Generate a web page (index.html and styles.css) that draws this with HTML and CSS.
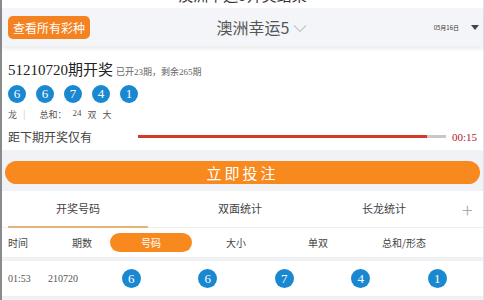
FILE: index.html
```html
<!DOCTYPE html>
<html lang="zh">
<head>
<meta charset="utf-8">
<link rel="stylesheet" href="styles.css">
</head>
<body>
<div class="page">
  <div class="topbar"><div class="topbar-title">澳洲幸运5开奖结果</div></div>
  <header class="header">
    <button class="all-btn">查看所有彩种</button>
    <div class="lottery-name">澳洲幸运5
      <svg class="chev" width="14" height="9" viewBox="0 0 14 9"><path d="M1 1.5 L7 7.5 L13 1.5" fill="none" stroke="#c4c8cf" stroke-width="1.2"/></svg>
    </div>
    <div class="date">05月16日 <span class="tri"></span></div>
  </header>

  <section class="card">
    <div class="issue"><span class="issue-no">51210720期开奖</span><span class="issue-sub">已开23期，剩余265期</span></div>
    <div class="balls">
      <span class="ball">6</span><span class="ball">6</span><span class="ball">7</span><span class="ball">4</span><span class="ball">1</span>
    </div>
    <div class="stats"><span>龙</span><span class="sep">|</span><span class="sum">总和：</span><span class="num">24</span><span>双</span><span>大</span></div>
    <div class="countdown">
      <span class="cd-label">距下期开奖仅有</span>
      <div class="bar"><div class="bar-fill" style="width:94%"></div></div>
      <span class="cd-time">00:15</span>
    </div>
  </section>

  <div class="bet-wrap"><button class="bet-btn">立即投注</button></div>

  <nav class="tabs">
    <div class="tab active">开奖号码</div>
    <div class="tab">双面统计</div>
    <div class="tab">长龙统计</div>
    <div class="plus">+</div>
  </nav>

  <div class="row head">
    <div class="c-time">时间</div>
    <div class="c-issue">期数</div>
    <div class="c-pill"><span class="pill">号码</span></div>
    <div class="c-col">大小</div>
    <div class="c-col">单双</div>
    <div class="c-col">总和/形态</div>
  </div>
  <div class="row data">
    <div class="c-time num-serif">01:53</div>
    <div class="c-issue num-serif">210720</div>
    <div class="c-ball"><span class="ball">6</span></div>
    <div class="c-ball"><span class="ball">6</span></div>
    <div class="c-ball"><span class="ball">7</span></div>
    <div class="c-ball"><span class="ball">4</span></div>
    <div class="c-ball"><span class="ball">1</span></div>
  </div>
</div>
</body>
</html>
```

FILE: styles.css
```css
* { box-sizing: border-box; }
html, body { margin: 0; padding: 0; }
body {
  width: 484px;
  height: 300px;
  overflow: hidden;
  background: #f1f2f5;
  font-family: "Noto Sans CJK SC", "Noto Sans", sans-serif;
  color: #333;
}
.page {
  border-left: 2px solid #8a8a8a;
  border-right: 1px solid #e2e2e2;
  height: 300px;
  background: #f1f2f5;
}
.topbar {
  height: 8px;
  overflow: hidden;
  background: #fff;
}
.topbar-title {
  margin-top: -14px;
  font-size: 15px;
  line-height: 18px;
  text-align: center;
  color: #333;
}
.header {
  height: 38px;
  background: #f3f5f8;
  display: flex;
  align-items: center;
  padding: 0 4px 0 6px;
  position: relative;
  box-shadow: 0 3px 4px rgba(0,0,0,0.08);
  z-index: 1;
}
.all-btn {
  border: none;
  background: #f58220;
  color: #fff;
  font-family: inherit;
  font-size: 12px;
  height: 23px;
  padding: 0 5px;
  border-radius: 5px;
  line-height: 23px;
}
.lottery-name {
  flex: 1;
  text-align: center;
  font-size: 16px;
  color: #555;
  padding-left: 0;
  display: flex;
  justify-content: center;
  align-items: center;
  gap: 4px;
}
.chev { margin-top: 2px; }
.date {
  font-size: 6px;
  color: #333;
  display: flex;
  align-items: center;
  gap: 12px;
}
.tri {
  width: 0; height: 0;
  border-left: 4px solid transparent;
  border-right: 4px solid transparent;
  border-top: 5px solid #444;
}
.card {
  background: #fff;
  padding: 12px 6px 0 6px;
  height: 104px;
}
.issue { display: flex; align-items: baseline; gap: 3px; }
.issue-no {
  font-family: "Liberation Serif", "Noto Sans CJK SC", serif;
  font-size: 15px;
  color: #222;
}
.issue-sub { font-size: 9px; color: #666; font-family: "Liberation Serif", "Noto Sans CJK SC", serif; }
.balls { display: flex; gap: 10px; margin-top: 6px; }
.ball {
  width: 18px; height: 18px;
  border-radius: 50%;
  background: #1a88d0;
  color: #fff;
  font-family: "Liberation Serif", serif;
  font-size: 13px;
  display: inline-flex;
  align-items: center;
  justify-content: center;
}
.stats {
  font-size: 9px;
  color: #555;
  margin-top: 5px;
  display: flex;
  gap: 6px;
}
.stats .sep { color: #ccc; margin-right: 8px; }
.stats .num { font-family: "Liberation Serif", serif; }
.countdown {
  display: flex;
  align-items: center;
  margin-top: 7px;
}
.cd-label { font-size: 12px; color: #444; width: 130px; }
.bar {
  flex: 1;
  height: 3px;
  background: #c8c8c8;
}
.bar-fill { height: 3px; background: #d43a2a; }
.cd-time {
  font-family: "Liberation Serif", serif;
  font-size: 11px;
  color: #b0202a;
  margin-left: 6px;
}
.bet-wrap { padding: 10px 3px 7px 3px; }
.bet-btn {
  width: 100%;
  height: 23px;
  border: none;
  border-radius: 12px;
  background: #f7891f;
  color: #fff;
  font-family: inherit;
  font-size: 15px;
  letter-spacing: 3px;
  line-height: 23px;
  padding: 0;
}
.tabs {
  background: #fff;
  height: 37px;
  display: flex;
  align-items: center;
  position: relative;
  border-bottom: 1px solid #eee;
}
.tab {
  font-size: 11px;
  color: #444;
  text-align: center;
  height: 37px;
  line-height: 35px;
}
.tab:nth-child(1) { width: 140px; margin-left: 6px; border-bottom: 2px solid #e6b47a; }
.tab:nth-child(2) { width: 184px; }
.tab:nth-child(3) { width: 104px; }
.plus {
  font-size: 20px;
  color: #aaa;
  font-weight: 300;
  margin-left: 26px;
  line-height: 37px;
}
.row {
  background: #fff;
  display: flex;
  align-items: center;
  border-bottom: 1px solid #eee;
}
.row.head { height: 30px; font-size: 10px; color: #444; margin-bottom: 3px; }
.row.data { height: 36px; font-size: 9px; color: #555; }
.c-time { width: 40px; padding-left: 6px; }
.c-issue { width: 65px; padding-left: 30px; }
.row.data .c-issue { padding-left: 6px; }
.c-pill { width: 88px; text-align: center; }
.pill {
  display: inline-block;
  width: 82px;
  height: 19px;
  line-height: 19px;
  border-radius: 10px;
  background: #f7891f;
  color: #fff;
  font-size: 10px;
}
.c-col { width: 82px; text-align: center; }
.c-col:last-child { width: 90px; }
.num-serif { font-family: "Liberation Serif", serif; font-size: 10px; }
.c-ball { width: 76.5px; display: flex; justify-content: center; }
.row.data .c-ball:nth-child(3) { margin-left: -14px; }
.row.data .ball { width: 19px; height: 19px; font-size: 13px; }
```
